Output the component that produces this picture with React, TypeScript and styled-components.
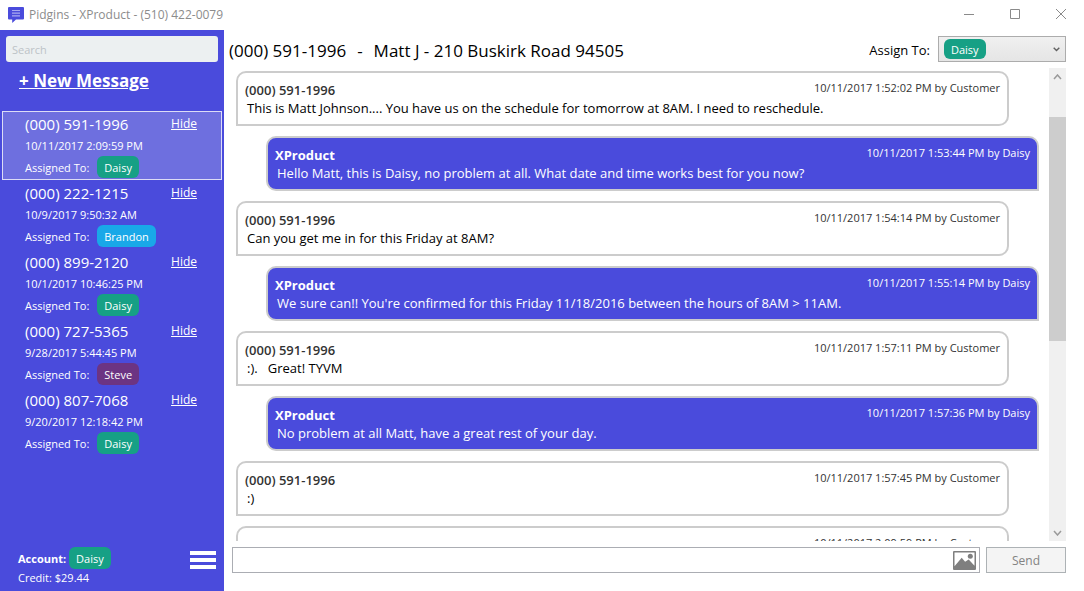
import React from 'react';
import styled, { createGlobalStyle, css } from 'styled-components';

const GlobalStyle = createGlobalStyle`
  * { box-sizing: border-box; }
  body {
    margin: 0;
    background: #fff;
    font-family: 'Open Sans', 'Noto Sans', sans-serif;
    font-size: 12px;
    color: #000;
  }
  button, input, select { font: inherit; }
`;

const BLUE = '#4a4bdc';

const AppWindow = styled.div`
  display: grid;
  grid-template-rows: 30px minmax(0, 1fr);
  height: 100vh;
`;

const TitleBar = styled.header`
  display: flex;
  align-items: center;
  padding-left: 8px;
`;

const WindowTitle = styled.h1`
  flex: 1;
  margin: 0 0 0 5px;
  font-size: 12px;
  line-height: 28px;
  font-weight: 400;
  color: #8c8c8c;
`;

const WindowButton = styled.button`
  display: flex;
  align-items: center;
  justify-content: center;
  width: 46px;
  height: 30px;
  padding: 0 0 2px;
  border: 0;
  background: transparent;
  color: #8a8a8a;
`;

const Body = styled.div`
  display: grid;
  grid-template-columns: 224px minmax(0, 1fr);
  min-height: 0;
`;

const Sidebar = styled.aside`
  display: flex;
  flex-direction: column;
  padding: 6px 2px 4px;
  background: ${BLUE};
  color: #fff;
`;

const SearchBox = styled.input`
  height: 26px;
  margin: 0 4px;
  padding: 0 6px;
  border: 0;
  border-radius: 3px;
  background: #ecf0f1;
  color: #333;
  font-size: 11px;
  &::placeholder { color: #bdc3c7; opacity: 1; }
`;

const NewMessage = styled.a`
  align-self: flex-start;
  margin: 7px 0 18px 17px;
  font-size: 17px;
  line-height: 24px;
  font-weight: 700;
  color: #fff;
`;

const ConversationList = styled.ul`
  flex: 1;
  margin: 0;
  padding: 0;
  list-style: none;
`;

const Conversation = styled.li<{ $selected?: boolean }>`
  display: grid;
  grid-template-columns: 1fr auto;
  grid-template-rows: 20px 22px 22px;
  align-items: center;
  padding: 2px 24px 1px 22px;
  border: 1px solid ${(p) => (p.$selected ? '#dcdcf6' : 'transparent')};
  background: ${(p) => (p.$selected ? '#6e6fdf' : 'transparent')};
  font-size: 11px;
`;

const Phone = styled.span`
  font-size: 15px;
  line-height: 20px;
`;

const HideLink = styled.a`
  font-size: 12px;
  line-height: 20px;
  color: #fff;
`;

const FullRow = styled.div`
  grid-column: 1 / -1;
  display: flex;
  align-items: center;
  gap: 8px;
  line-height: 23px;
`;

const badgeStyle = css`
  height: 22px;
  padding: 0 7px;
  border-radius: 6px;
  font-size: 11px;
  line-height: 23px;
  color: #fff;
`;

const Badge = styled.span<{ $color: string }>`
  ${badgeStyle}
  background: ${(p) => p.$color};
`;

const AccountBar = styled.footer`
  display: flex;
  justify-content: space-between;
  align-items: flex-start;
  padding: 0 6px 0 16px;
  font-size: 11px;
`;

const AccountLine = styled.div`
  display: flex;
  align-items: center;
  gap: 3px;
`;

const Credit = styled.div`
  line-height: 18px;
`;

const MenuButton = styled.button`
  display: flex;
  flex-direction: column;
  gap: 3px;
  width: 26px;
  margin-top: 4px;
  padding: 0;
  border: 0;
  background: transparent;
`;

const MenuBar = styled.span`
  height: 4px;
  width: 100%;
  background: #fff;
`;

const Chat = styled.main`
  display: grid;
  grid-template-rows: 38px minmax(0, 1fr) 50px;
  min-height: 0;
  padding-right: 18px;
`;

const ChatHeader = styled.div`
  display: flex;
  align-items: center;
  padding: 0 0 0 5px;
`;

const Contact = styled.h2`
  flex: 1;
  display: flex;
  gap: 11px;
  margin: 0;
  padding-top: 2px;
  font-size: 17px;
  font-weight: 400;
`;

const AssignLabel = styled.label`
  margin-right: 8px;
  padding-top: 2px;
  font-size: 13px;
`;

const AssignBox = styled.div`
  display: flex;
  align-items: center;
  justify-content: space-between;
  width: 128px;
  height: 26px;
  padding: 0 5px;
  border: 1px solid #acacac;
  background: linear-gradient(#f0f0f0, #e5e5e5);
`;

const AssignSelect = styled.select`
  appearance: none;
  field-sizing: content;
  ${badgeStyle}
  height: 20px;
  padding-top: 1px;
  line-height: 19px;
  border: 0;
  background: #16a085;
`;

const Scroller = styled.div`
  display: grid;
  grid-template-columns: minmax(0, 1fr) 17px;
  min-height: 0;
`;

const Messages = styled.div`
  display: flex;
  flex-direction: column;
  gap: 10px;
  padding: 3px 10px 0 12px;
  overflow: hidden;
`;

const Bubble = styled.article<{ $mine: boolean }>`
  flex: none;
  display: grid;
  grid-template-columns: 1fr auto;
  grid-template-rows: 18px 18px;
  height: 55px;
  padding: 8px 7px;
  border: 2px solid #ccc;
  ${(p) =>
    p.$mine
      ? css`
          margin-left: 30px;
          border-radius: 10px 10px 0 10px;
          background: ${BLUE};
          color: #fff;
        `
      : css`
          margin-right: 30px;
          border-radius: 10px 10px 10px 0;
          background: #fff;
        `}
`;

const Sender = styled.strong<{ $mine: boolean }>`
  font-size: 13px;
  line-height: 18px;
  font-weight: ${(p) => (p.$mine ? 700 : 600)};
  color: ${(p) => (p.$mine ? '#fff' : '#333')};
`;

const Stamp = styled.time<{ $mine: boolean }>`
  font-size: 11px;
  line-height: 14px;
  color: ${(p) => (p.$mine ? '#fff' : '#333')};
`;

const MessageText = styled.p`
  grid-column: 1 / -1;
  margin: 0 0 0 2px;
  font-size: 13px;
  line-height: 18px;
  white-space: pre-wrap;
`;

const ScrollTrack = styled.div`
  display: grid;
  grid-template-rows: 17px 32fr 225fr 183fr 17px;
  background: #f0f0f0;
`;

const ScrollArrow = styled.button<{ $row: number }>`
  grid-row: ${(p) => p.$row};
  display: flex;
  align-items: center;
  justify-content: center;
  padding: 0;
  border: 0;
  background: transparent;
  color: #9a9a9a;
`;

const ScrollThumb = styled.div`
  grid-row: 3;
  background: #cdcdcd;
`;

const Composer = styled.form`
  display: flex;
  align-items: flex-start;
  gap: 6px;
  padding: 6px 0 0 8px;
`;

const Field = styled.div`
  flex: 1;
  display: flex;
  align-items: center;
  height: 26px;
  padding-right: 3px;
  border: 1px solid #abadb3;
`;

const MessageInput = styled.input`
  flex: 1;
  min-width: 0;
  height: 24px;
  padding: 0 6px;
  border: 0;
  outline: 0;
  background: transparent;
  font-size: 13px;
`;

const PictureButton = styled.button`
  display: flex;
  padding: 0;
  border: 0;
  background: transparent;
`;

const SendButton = styled.button`
  width: 80px;
  height: 26px;
  padding: 0;
  border: 1px solid #adb2b5;
  background: #f4f4f4;
  color: #838383;
`;

const COLORS: Record<string, string> = {
  Daisy: '#16a085',
  Brandon: '#19a8e8',
  Steve: '#6c3483',
};

const conversations = [
  { phone: '(000) 591-1996', date: '10/11/2017 2:09:59 PM', user: 'Daisy' },
  { phone: '(000) 222-1215', date: '10/9/2017 9:50:32 AM', user: 'Brandon' },
  { phone: '(000) 899-2120', date: '10/1/2017 10:46:25 PM', user: 'Daisy' },
  { phone: '(000) 727-5365', date: '9/28/2017 5:44:45 PM', user: 'Steve' },
  { phone: '(000) 807-7068', date: '9/20/2017 12:18:42 PM', user: 'Daisy' },
];

const messages = [
  { mine: false, time: '10/11/2017 1:52:02 PM', text: 'This is Matt Johnson.... You have us on the schedule for tomorrow at 8AM. I need to reschedule.' },
  { mine: true, time: '10/11/2017 1:53:44 PM', text: 'Hello Matt, this is Daisy, no problem at all. What date and time works best for you now?' },
  { mine: false, time: '10/11/2017 1:54:14 PM', text: 'Can you get me in for this Friday at 8AM?' },
  { mine: true, time: '10/11/2017 1:55:14 PM', text: "We sure can!! You're confirmed for this Friday 11/18/2016 between the hours of 8AM > 11AM." },
  { mine: false, time: '10/11/2017 1:57:11 PM', text: ':).   Great! TYVM' },
  { mine: true, time: '10/11/2017 1:57:36 PM', text: 'No problem at all Matt, have a great rest of your day.' },
  { mine: false, time: '10/11/2017 1:57:45 PM', text: ':)' },
  { mine: false, time: '10/11/2017 2:09:59 PM', text: '' },
];

export default function App() {
  return (
    <>
      <GlobalStyle />
      <AppWindow>
        <TitleBar>
          <svg width="16" height="17" viewBox="0 0 16 17" aria-hidden="true">
            <path d="M1 0h14a1 1 0 0 1 1 1v10.500a1 1 0 0 1-1 1H8L4.200 16v-3.500H1a1 1 0 0 1-1-1V1a1 1 0 0 1 1-1z" fill={BLUE} />
            <path d="M4 3.500h8M4 6.200h8M4 8.900h8" stroke="#a9aaf0" strokeWidth="1.200" />
          </svg>
          <WindowTitle>Pidgins - XProduct - (510) 422-0079</WindowTitle>
          <WindowButton aria-label="Minimize">
            <svg width="10" height="10" stroke="currentColor"><path d="M0 5.500h10" /></svg>
          </WindowButton>
          <WindowButton aria-label="Maximize">
            <svg width="10" height="10" fill="none" stroke="currentColor"><path d="M.5.5h9v9h-9z" /></svg>
          </WindowButton>
          <WindowButton aria-label="Close">
            <svg width="10" height="10" stroke="currentColor"><path d="M0 0l10 10M10 0L0 10" /></svg>
          </WindowButton>
        </TitleBar>
        <Body>
          <Sidebar>
            <SearchBox type="search" placeholder="Search" aria-label="Search" />
            <NewMessage href="#new">+ New Message</NewMessage>
            <ConversationList>
              {conversations.map((c, i) => (
                <Conversation key={c.phone} $selected={i === 0}>
                  <Phone>{c.phone}</Phone>
                  <HideLink href="#hide">Hide</HideLink>
                  <FullRow>{c.date}</FullRow>
                  <FullRow>
                    <span>Assigned To:</span>
                    <Badge $color={COLORS[c.user]}>{c.user}</Badge>
                  </FullRow>
                </Conversation>
              ))}
            </ConversationList>
            <AccountBar>
              <div>
                <AccountLine>
                  <strong>Account:</strong>
                  <Badge $color={COLORS.Daisy}>Daisy</Badge>
                </AccountLine>
                <Credit>Credit: $29.44</Credit>
              </div>
              <MenuButton aria-label="Menu">
                <MenuBar />
                <MenuBar />
                <MenuBar />
              </MenuButton>
            </AccountBar>
          </Sidebar>
          <Chat>
            <ChatHeader>
              <Contact>
                <span>(000) 591-1996</span>
                <span>-</span>
                <span>Matt J - 210 Buskirk Road 94505</span>
              </Contact>
              <AssignLabel htmlFor="assign">Assign To:</AssignLabel>
              <AssignBox>
                <AssignSelect id="assign" defaultValue="Daisy">
                  <option>Daisy</option>
                </AssignSelect>
                <svg width="7" height="5" fill="none" stroke="#606060" strokeWidth="1.400" aria-hidden="true">
                  <path d="M.7.700l2.800 2.800L6.300.700" />
                </svg>
              </AssignBox>
            </ChatHeader>
            <Scroller>
              <Messages>
                {messages.map((m) => (
                  <Bubble key={m.time} $mine={m.mine}>
                    <Sender $mine={m.mine}>{m.mine ? 'XProduct' : '(000) 591-1996'}</Sender>
                    <Stamp $mine={m.mine}>
                      {m.time} by {m.mine ? 'Daisy' : 'Customer'}
                    </Stamp>
                    <MessageText>{m.text}</MessageText>
                  </Bubble>
                ))}
              </Messages>
              <ScrollTrack>
                <ScrollArrow $row={1} aria-label="Scroll up">
                  <svg width="9" height="6" fill="none" stroke="currentColor" strokeWidth="1.500"><path d="M1 5l3.500-4L8 5" /></svg>
                </ScrollArrow>
                <ScrollThumb />
                <ScrollArrow $row={5} aria-label="Scroll down">
                  <svg width="9" height="6" fill="none" stroke="currentColor" strokeWidth="1.500"><path d="M1 1l3.500 4L8 1" /></svg>
                </ScrollArrow>
              </ScrollTrack>
            </Scroller>
            <Composer onSubmit={(e: React.FormEvent) => e.preventDefault()}>
              <Field>
                <MessageInput type="text" aria-label="Message" />
                <PictureButton type="button" aria-label="Attach picture">
                  <svg width="23" height="19" viewBox="0 0 23 19">
                    <path d="M1 0h21a1 1 0 0 1 1 1v17a1 1 0 0 1-1 1H1a1 1 0 0 1-1-1V1a1 1 0 0 1 1-1zM1.500 1.500v13.700l7.200-8.400 3.400 4 3.600-2.300 5.800 6.200V1.500z" fill="#7f7f7f" fillRule="evenodd" />
                    <circle cx="17.300" cy="5.300" r="2.500" fill="#7f7f7f" />
                  </svg>
                </PictureButton>
              </Field>
              <SendButton type="submit">Send</SendButton>
            </Composer>
          </Chat>
        </Body>
      </AppWindow>
    </>
  );
}
